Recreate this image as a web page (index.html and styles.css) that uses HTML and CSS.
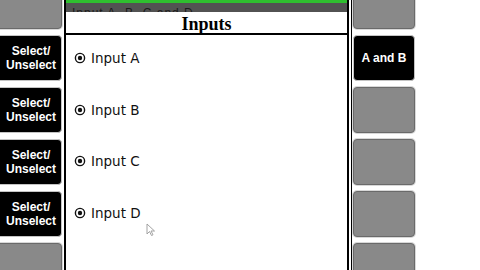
FILE: index.html
```html
<!DOCTYPE html>
<html>
<head>
<meta charset="utf-8">
<link rel="stylesheet" href="styles.css">
</head>
<body>
<div class="screen">
  <div class="side left">
    <div class="key gray"></div>
    <div class="key black"><span>Select/<br>Unselect</span></div>
    <div class="key black"><span>Select/<br>Unselect</span></div>
    <div class="key black"><span>Select/<br>Unselect</span></div>
    <div class="key black"><span>Select/<br>Unselect</span></div>
    <div class="key gray"></div>
  </div>
  <div class="panel">
    <div class="greenbar"></div>
    <div class="band"><span class="band-text">Input A, B, C and D</span></div>
    <div class="title">Inputs</div>
    <ul class="list">
      <li class="row"><svg class="radio" width="12" height="12" viewBox="0 0 12 12"><circle cx="6" cy="6" r="4.6" fill="#fff" stroke="#111" stroke-width="1.4"/><circle cx="6" cy="6" r="2.2" fill="#111"/></svg><span>Input A</span></li>
      <li class="row"><svg class="radio" width="12" height="12" viewBox="0 0 12 12"><circle cx="6" cy="6" r="4.6" fill="#fff" stroke="#111" stroke-width="1.4"/><circle cx="6" cy="6" r="2.2" fill="#111"/></svg><span>Input B</span></li>
      <li class="row"><svg class="radio" width="12" height="12" viewBox="0 0 12 12"><circle cx="6" cy="6" r="4.6" fill="#fff" stroke="#111" stroke-width="1.4"/><circle cx="6" cy="6" r="2.2" fill="#111"/></svg><span>Input C</span></li>
      <li class="row"><svg class="radio" width="12" height="12" viewBox="0 0 12 12"><circle cx="6" cy="6" r="4.6" fill="#fff" stroke="#111" stroke-width="1.4"/><circle cx="6" cy="6" r="2.2" fill="#111"/></svg><span>Input D</span></li>
    </ul>
    <svg class="cursor" width="10" height="14" viewBox="0 0 10 14"><path d="M1 1 L1 11 L3.5 8.5 L5.5 12.5 L7 11.8 L5 8 L8.5 8 Z" fill="#fff" stroke="#999" stroke-width="0.9" stroke-linejoin="round"/></svg>
  </div>
  <div class="side right">
    <div class="key gray"></div>
    <div class="key black"><span>A and B</span></div>
    <div class="key gray"></div>
    <div class="key gray"></div>
    <div class="key gray"></div>
    <div class="key gray"></div>
  </div>
</div>
</body>
</html>
```

FILE: styles.css
```css
html, body {
  margin: 0;
  padding: 0;
  background: #fff;
}
.screen {
  width: 480px;
  height: 270px;
  overflow: hidden;
  display: flex;
  align-items: stretch;
  background: #fff;
}
.side {
  display: flex;
  flex-direction: column;
  flex: none;
}
.left {
  width: 62px;
  padding-right: 2px;
  border-right: 2px solid #000;
  margin-top: -20px;
}
.left .key {
  margin-left: -5px;
}
.right {
  width: 62px;
  margin-left: 2px;
  padding-left: 1px;
  border-left: 1px solid #000;
  margin-top: -20px;
}
.key {
  flex: none;
  height: 44px;
  margin: 3px 0;
  border-radius: 4px;
  display: flex;
  align-items: center;
  justify-content: center;
  text-align: center;
  font-family: "Liberation Sans", Arial, sans-serif;
  font-weight: bold;
  font-size: 12px;
  line-height: 14px;
  color: #fff;
}
.key.black {
  background: #000;
  border: 1px solid #c4c4c4;
}
.key.gray {
  background: #898989;
  border: 1px solid #6a6a6a;
  box-shadow: 0 0 0 1px #d8d8d8;
}
.left .key span {
  padding-left: 5px;
}
.panel {
  position: relative;
  flex: none;
  width: 281px;
  border-right: 2px solid #000;
  display: flex;
  flex-direction: column;
  background: #fff;
}
.greenbar {
  height: 3px;
  background: #2fbf2f;
}
.band {
  height: 9px;
  background: #525252;
  overflow: hidden;
  padding-left: 6px;
}
.band-text {
  display: block;
  font-family: "Liberation Sans", Arial, sans-serif;
  font-size: 12px;
  line-height: 9px;
  padding-top: 6px;
  color: #1a1a1a;
  letter-spacing: 1px;
}
.title {
  height: 18px;
  padding-top: 3px;
  border-bottom: 2px solid #000;
  text-align: center;
  font-family: "Liberation Serif", "Times New Roman", serif;
  font-weight: bold;
  font-size: 18px;
  line-height: 18px;
  color: #000;
}
.list {
  list-style: none;
  margin: 0;
  padding: 15px 0 0 8px;
  display: flex;
  flex-direction: column;
  gap: 35.7px;
}
.row {
  height: 16px;
  display: flex;
  align-items: center;
  gap: 5px;
  font-family: "DejaVu Sans", Verdana, sans-serif;
  font-size: 13.5px;
  color: #111;
}
.radio {
  flex: none;
}
.cursor {
  position: absolute;
  left: 80px;
  top: 223px;
}
```
